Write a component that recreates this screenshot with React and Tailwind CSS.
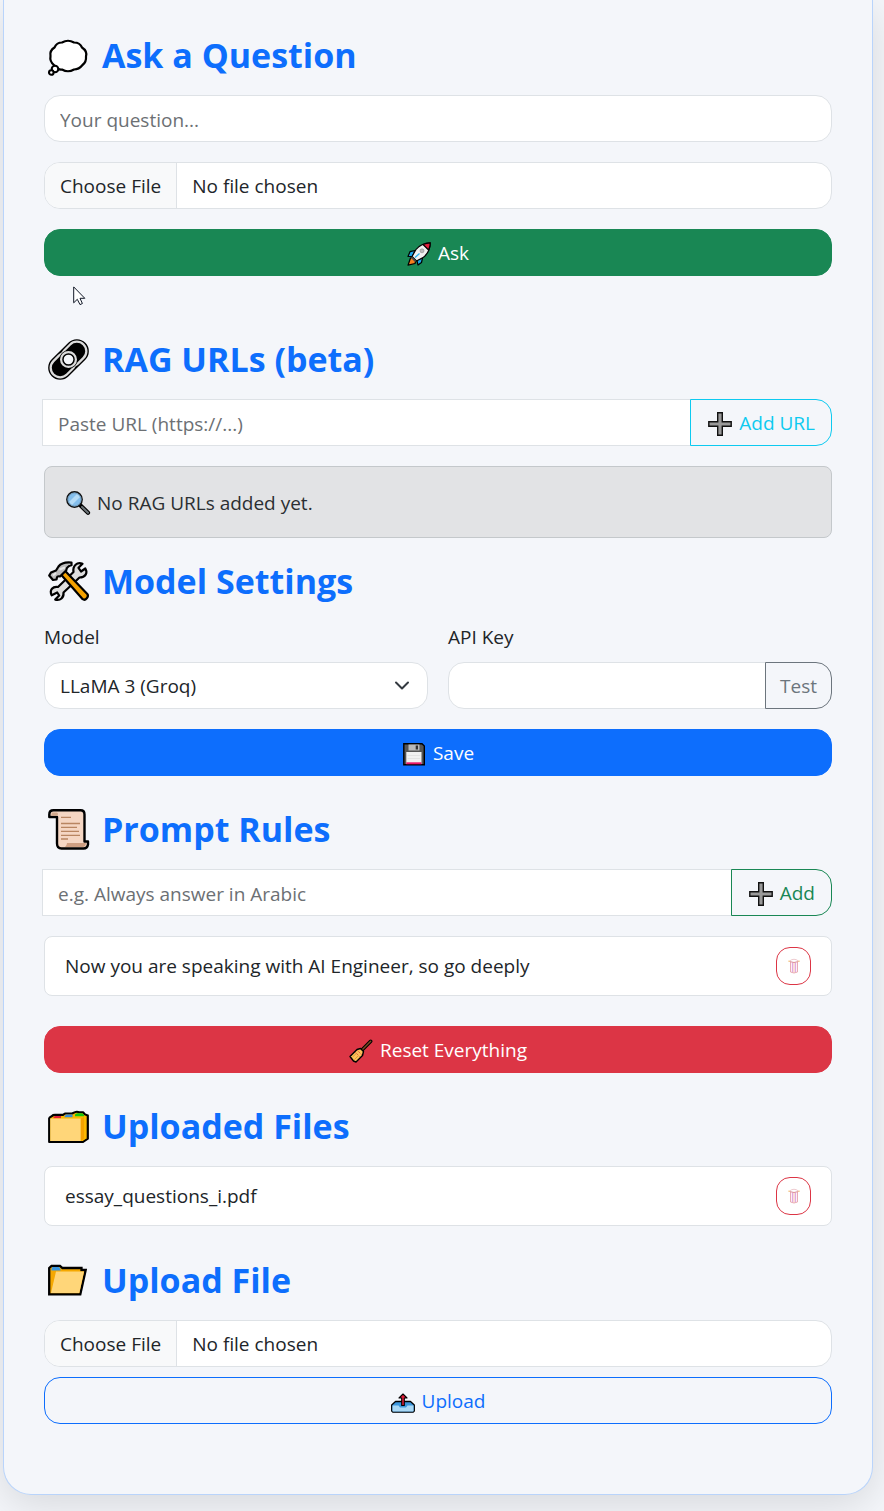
import React from 'react';

const FIELD =
  'h-[47px] min-w-0 border border-[#dee2e6] bg-white px-[15px] pt-0.5 text-[19px] text-[#212529] placeholder:text-[#6c7074] placeholder:opacity-100 outline-none';
const FILE =
  'block h-[47px] w-full rounded-2xl border border-[#dee2e6] bg-white text-[19px] leading-[47px] text-[#212529] file:mr-[15px] file:h-[47px] file:border-0 file:border-r file:border-solid file:border-[#dee2e6] file:bg-[#f8f9fa] file:px-[15px] file:text-[19px] file:text-[#212529]';
const WIDE =
  'flex h-[47px] w-full items-center justify-center gap-[7px] rounded-2xl border pt-0.5 text-[19px]';
const ADDON =
  'relative -ml-px flex h-[47px] shrink-0 items-center gap-[7px] rounded-r-2xl border pt-0.5 text-[19px]';

function Big({ children }) {
  return (
    <svg aria-hidden="true" viewBox="0 0 41 41" className="h-[41px] w-[41px] shrink-0 overflow-visible">
      {children}
    </svg>
  );
}

function Small({ children }) {
  return (
    <svg aria-hidden="true" viewBox="0 0 24 24" className="h-6 w-6 shrink-0 overflow-visible">
      {children}
    </svg>
  );
}

function Thought() {
  return (
    <Big>
      <path
        d="M14 7.500Q20 4 26 7.500Q32 7.500 34 12.500Q39.500 16 38 21.500Q38.500 27 34.500 30Q31 34.500 26 34.500Q20 38 14 34.500Q8 35 6 30Q1.500 26.500 2.500 21Q1.500 15.500 6.500 12.500Q8.500 7.500 14 7.500Z"
        fill="#fff" stroke="#000" strokeWidth="2.200" strokeLinejoin="round"
      />
      <circle cx="7" cy="34" r="3.300" fill="#fff" stroke="#000" strokeWidth="2.100" />
      <circle cx="3.300" cy="37.500" r="2.300" fill="#fff" stroke="#000" strokeWidth="2.100" />
    </Big>
  );
}

function Chain() {
  return (
    <Big>
      <g transform="rotate(-45 20.500 20.500)">
        <rect x="-3.300" y="8.500" width="47.600" height="24" rx="12" fill="#000" />
        <rect x="15" y="11" width="26.800" height="19" rx="9.500" fill="none" stroke="#dcdcdc" strokeWidth="2.300" />
        <rect x="-.8" y="11" width="26.800" height="19" rx="9.500" fill="none" stroke="#dcdcdc" strokeWidth="2.300" />
        <circle cx="20.500" cy="20.500" r="9.200" fill="#000" />
        <circle cx="20.500" cy="20.500" r="7.400" fill="#000" stroke="#dcdcdc" strokeWidth="2.200" />
        <circle cx="20.500" cy="20.500" r="4.800" fill="#f4f6fa" />
      </g>
    </Big>
  );
}

function Tools() {
  return (
    <Big>
      <g strokeLinejoin="round" strokeWidth="2.200" stroke="#000">
        <path
          d="M34.500 2.800L30.500 6.800L33 10.500L37.300 7.500C40 12 37.500 16.500 31.500 16.500L15.500 31.500C16 36.500 12.500 40 7.200 38.600L11.200 34.500L9.200 31.500L3.700 34.300C1 29 5 25 10 26L25.500 11C24.500 5 29 0.500 34.500 2.800Z"
          fill="#dedede"
        />
        <path d="M12.500 13L16.500 9.200L39.300 33C41.300 35.500 37.500 40.200 34.700 38.200Z" fill="#f5a200" />
        <path
          d="M10.500 5.500C13.500 1.500 18.500 1 23.500 1.500V4.300C20.500 5 18.500 6.500 18.300 9.200L12 15.500C9.500 14.800 9 15.500 8.500 18.500L5 19L1.200 14.500L3 11.500L8 9.500Z"
          fill="#bcbcbc"
        />
      </g>
      <path d="M11.500 8.500L17 6.500M5 14.500L8 12" stroke="#e8e8e8" strokeWidth="2" />
    </Big>
  );
}

function Scroll() {
  return (
    <Big>
      <path
        d="M5.500 1.300H32.500C35.500 1.300 36.500 3 36.500 5.500V32.500H40V35.500C39.500 38.500 37.500 39.500 35.500 39.500H13.500C10.500 39.500 9 37.500 9 34.500V8H1.300V5.500C1.300 2.800 3 1.300 5.500 1.300Z"
        fill="#f5d6c3" stroke="#000" strokeWidth="2.400" strokeLinejoin="round"
      />
      <path d="M4 3.500H9Q11 5 9 6.800H3Z" fill="#d3a98c" />
      <path d="M19 34H38Q37.500 37.800 35 38H17Q19 36.500 19 34Z" fill="#cf9f82" />
      <path d="M13 8.300H23M13 14.500H32M13 18.400H29M13 22.400H31M13 26.300H32M13 30H20" stroke="#b98561" strokeWidth="1.300" />
    </Big>
  );
}

function Dividers() {
  return (
    <Big>
      <g transform="translate(0 3) scale(1 .93)">
        <path
          d="M1.200 10Q1.200 9 4 7.500Q5 6.300 7 6.300H15L17 4.800H24L26.500 3.600Q29 2.500 31 3.500H35L37 5.800L39.800 7V32L35 35.500H1.200Z"
          fill="#fcb900" stroke="#000" strokeWidth="2.200" strokeLinejoin="round"
        />
        <path d="M5.500 8.800L7 7.500H13V10H5.500Z" fill="#e01e37" />
        <path d="M16.500 8L18 6H24.500V8.800H16.500Z" fill="#3b8ed8" />
        <path d="M27 6L29 4.500H34L36 6.200V7.800H27Z" fill="#16c60c" />
        <rect x="2.300" y="10.300" width="30.500" height="24.100" fill="#ffd679" />
        <path d="M32.800 10.300L36 8.500V32L32.800 34.500Z" fill="#f5a200" />
      </g>
    </Big>
  );
}

function FolderOpen() {
  return (
    <Big>
      <path
        d="M1.200 8L3.500 5.800H12L14.500 8H33.500V10H37.700L32.300 34.300H1.200Z"
        fill="#f5a800" stroke="#000" strokeWidth="2.300" strokeLinejoin="miter"
      />
      <path d="M3.500 8.800L4.500 7H11L12.500 9V10.500H3.500Z" fill="#3b96dd" />
      <path d="M8 11.500H36L31.300 33H3Z" fill="#ffd679" />
    </Big>
  );
}

function Rocket() {
  return (
    <Small>
      <g stroke="#000" strokeWidth="1.200" strokeLinejoin="round">
        <path d="M8 8.500L3 9.700L1 14.500L5.500 14.500ZM15.500 16L14.500 20.500L11 23L9.800 18Z" fill="#1fa5e8" />
        <path d="M3.500 16L6.500 15L9 17.800L8 21.500L1 23.200Z" fill="#f7801e" />
        <path d="M5 14.500L9 7.500C12.500 3 17.500 1 23.300 0.800C23.300 6.500 21 11.500 16.500 15.300L9.500 19Z" fill="#f2f2f2" />
        <path d="M16 2.500Q19.500 1 23.300 0.800Q23.300 4.500 21.600 8Z" fill="#e0203c" />
      </g>
      <path d="M5 14.500L9.500 19L8 20L4 16Z" fill="#4a4a4a" />
      <circle cx="15" cy="8.800" r="2" fill="#bbb" stroke="#888" strokeWidth=".6" />
      <path d="M8 15.500L12.500 11.500" stroke="#2bb3ee" strokeWidth="1.300" />
    </Small>
  );
}

function Plus() {
  return (
    <Small>
      <path d="M9.700.8H14.300V9.700H23.200V14.300H14.300V23.200H9.700V14.300H.8V9.700H9.700Z" fill="#999" stroke="#111" strokeWidth="1.400" />
    </Small>
  );
}

function Magnifier() {
  return (
    <Small>
      <path d="M13.500 13.500L22 21.700" stroke="#000" strokeWidth="4.200" strokeLinecap="round" />
      <path d="M16 16L22 21.700" stroke="#6c7478" strokeWidth="2" strokeLinecap="round" />
      <circle cx="8.500" cy="8.500" r="7.700" fill="#83beec" stroke="#111" strokeWidth="1.400" />
      <path d="M3 11L11 3L14 6L6 14Z" fill="#b5dcf7" />
      <circle cx="8.500" cy="8.500" r="6.500" fill="none" stroke="#6b8da6" strokeWidth=".7" />
    </Small>
  );
}

function Floppy() {
  return (
    <Small>
      <path d="M1.800 1.800H20L22.300 4V22.700H1.800Z" fill="#555" stroke="#000" strokeWidth="1.400" />
      <path d="M6.500 2.500H17.500V8.500H6.500Z" fill="#b9b9b9" />
      <path d="M13.700 3.500H16V7.500H13.700Z" fill="#333" />
      <path d="M4.300 10H19.500V22H4.300Z" fill="#f1f1f1" />
      <path d="M4.300 20.300H19.500V22.300H4.300Z" fill="#e7196b" />
      <path d="M5.500 13.500H18.200M5.500 16.500H18.200" stroke="#ddd" strokeWidth=".7" />
    </Small>
  );
}

function Broom() {
  return (
    <Small>
      <path d="M13.500 10.500L21.700 2.300" stroke="#000" strokeWidth="3.600" strokeLinecap="round" />
      <path d="M13.500 10.500L21.700 2.300" stroke="#7a4f22" strokeWidth="1.400" strokeLinecap="round" />
      <path d="M8 10.500L11.500 9.500L14.500 12.500L13.500 16.500L7 23L4.500 22L1 17.500Z" fill="#fcc25b" stroke="#000" strokeWidth="1.400" strokeLinejoin="round" />
      <path d="M8.500 11.500L12.700 15.700M6.500 13.500L10.500 17.500" stroke="#e0443a" strokeWidth="1" strokeDasharray="1.500 1" />
      <path d="M3.500 18L7 14.800M5.500 20.500L9 17" stroke="#df8f24" strokeWidth=".8" />
    </Small>
  );
}

function Outbox() {
  return (
    <Small>
      <g transform="translate(0 1)">
        <path d="M.7 14L4.500 10.500H19.500L23.300 14V20L22 21.200H2L.7 20Z" fill="#3b96dd" stroke="#000" strokeWidth="1.300" strokeLinejoin="round" />
        <path d="M1.500 14.500H7.500L9 16.500H15L16.500 14.500H22.500V20.500H1.500Z" fill="#a9d8f5" />
        <path d="M12 3L16 7H13.300V14.500H10.700V7H8Z" fill="#e51c3a" stroke="#000" strokeWidth="1.100" strokeLinejoin="round" />
      </g>
    </Small>
  );
}

function TrashButton({ label }) {
  return (
    <button
      type="button"
      aria-label={label}
      className="flex h-[38px] w-[35px] shrink-0 items-center justify-center rounded-[14px] border border-[#dc3545]"
    >
      <svg aria-hidden="true" viewBox="0 0 12 16" className="h-4 w-3" fill="none">
        <path d="M2.500 4V14Q6 16 9.500 14V4" fill="#fdf1f6" stroke="#e5a3ad" strokeWidth=".9" />
        <path d="M4.500 4.500V14M7.500 4.500V14" stroke="#dba1e0" strokeWidth=".9" />
        <path d="M6 4.500V14.500" stroke="#f4b8a0" strokeWidth=".7" />
        <path d="M1.500 3.500Q6 5.500 10.500 3.500" stroke="#dc8f98" />
        <path d="M1.500 3Q6-.5 10.500 3" stroke="#e9bcc2" strokeWidth=".8" />
        <path d="M1 2.500V4M11 2.500V4" stroke="#f4c46c" />
      </svg>
    </button>
  );
}

function Heading({ icon, children }) {
  return (
    <h2 className="mb-4 flex h-12 items-center gap-[13px] pl-1 text-[34px] leading-[48px] font-bold text-[#0d6efd]">
      {icon}
      <span>{children}</span>
    </h2>
  );
}

function ListItem({ text, label }) {
  return (
    <ul>
      <li className="flex h-[60px] items-center justify-between rounded-lg border border-[#dee2e6] bg-white px-5 text-[19px] text-[#212529]">
        <span>{text}</span>
        <TrashButton label={label} />
      </li>
    </ul>
  );
}

export default function App() {
  return (
    <div className="min-h-screen overflow-hidden bg-[#f4f6fa] pr-[11px] pb-4 pl-[3px] font-['Open_Sans','Noto_Sans',sans-serif] text-[#212529]">
      <main className="rounded-b-[28px] border border-t-0 border-[#b9d4fb] bg-[#f4f6fa] px-10 pt-[31px] pb-[70px] shadow-[0_10px_40px_rgba(0,0,0,0.12)]">
        <section className="relative">
          <Heading icon={<Thought />}>Ask a Question</Heading>
          <form className="flex flex-col gap-5">
            <input type="text" aria-label="Your question" placeholder="Your question..." className={`${FIELD} w-full rounded-2xl`} />
            <input type="file" aria-label="Question attachment" className={FILE} />
            <button type="button" className={`${WIDE} border-[#198754] bg-[#198754] text-white`}>
              <Rocket />
              Ask
            </button>
          </form>
          <svg aria-hidden="true" viewBox="0 0 13 20" className="absolute -bottom-[30px] left-[29px] h-5 w-[13px]">
            <path d="M.7.900V16.800L4.300 13.300L7 18.600L9.400 17.500L7 12.300H11.800Z" fill="#fff" stroke="#111827" strokeWidth="1" strokeLinejoin="round" />
          </svg>
        </section>

        <section className="mt-[59px]">
          <Heading icon={<Chain />}>RAG URLs (beta)</Heading>
          <form className="-ml-0.5 flex">
            <input type="url" aria-label="RAG URL" placeholder="Paste URL (https://...)" className={`${FIELD} flex-1`} />
            <button type="button" className={`${ADDON} border-[#0dcaf0] pr-4 pl-[17px] text-[#0dcaf0]`}>
              <Plus />
              Add URL
            </button>
          </form>
          <p className="mt-5 flex h-[72px] items-center gap-[7px] rounded-lg border border-[#c4c8cb] bg-[#e2e3e5] px-[21px] pt-0.5 text-[19px] text-[#2b2f32]">
            <Magnifier />
            No RAG URLs added yet.
          </p>
        </section>

        <section className="mt-[19px]">
          <Heading icon={<Tools />}>Model Settings</Heading>
          <form>
            <div className="grid grid-cols-2 gap-5">
              <div>
                <label htmlFor="model" className="mb-2 block text-[19px] leading-[33px]">Model</label>
                <div className="relative">
                  <select id="model" className={`${FIELD} w-full appearance-none rounded-2xl`}>
                    <option>LLaMA 3 (Groq)</option>
                  </select>
                  <svg aria-hidden="true" viewBox="0 0 16 16" className="pointer-events-none absolute top-[15px] right-[18px] h-4 w-4">
                    <path d="M2 5.500L8 11.500L14 5.500" fill="none" stroke="#343a40" strokeWidth="2" strokeLinecap="round" strokeLinejoin="round" />
                  </svg>
                </div>
              </div>
              <div>
                <label htmlFor="key" className="mb-2 block text-[19px] leading-[33px]">API Key</label>
                <div className="flex">
                  <input id="key" type="password" className={`${FIELD} flex-1 rounded-l-2xl`} />
                  <button type="button" className={`${ADDON} border-[#6c757d] px-[14px] text-[#6c757d]`}>Test</button>
                </div>
              </div>
            </div>
            <button type="button" className={`${WIDE} mt-5 border-[#0d6efd] bg-[#0d6efd] text-white`}>
              <Floppy />
              Save
            </button>
          </form>
        </section>

        <section className="mt-[29px]">
          <Heading icon={<Scroll />}>Prompt Rules</Heading>
          <form className="-ml-0.5 mb-5 flex">
            <input type="text" aria-label="Prompt rule" placeholder="e.g. Always answer in Arabic" className={`${FIELD} flex-1`} />
            <button type="button" className={`${ADDON} border-[#198754] pr-4 pl-[17px] text-[#198754]`}>
              <Plus />
              Add
            </button>
          </form>
          <ListItem text="Now you are speaking with AI Engineer, so go deeply" label="Delete rule" />
          <button type="button" className={`${WIDE} mt-[30px] border-[#dc3545] bg-[#dc3545] text-white`}>
            <Broom />
            Reset Everything
          </button>
        </section>

        <section className="mt-[29px]">
          <Heading icon={<Dividers />}>Uploaded Files</Heading>
          <ListItem text="essay_questions_i.pdf" label="Delete file" />
        </section>

        <section className="mt-[30px]">
          <Heading icon={<FolderOpen />}>Upload File</Heading>
          <form className="flex flex-col gap-2.5">
            <input type="file" aria-label="File to upload" className={FILE} />
            <button type="button" className={`${WIDE} border-[#0d6efd] text-[#0d6efd]`}>
              <Outbox />
              Upload
            </button>
          </form>
        </section>
      </main>
    </div>
  );
}
